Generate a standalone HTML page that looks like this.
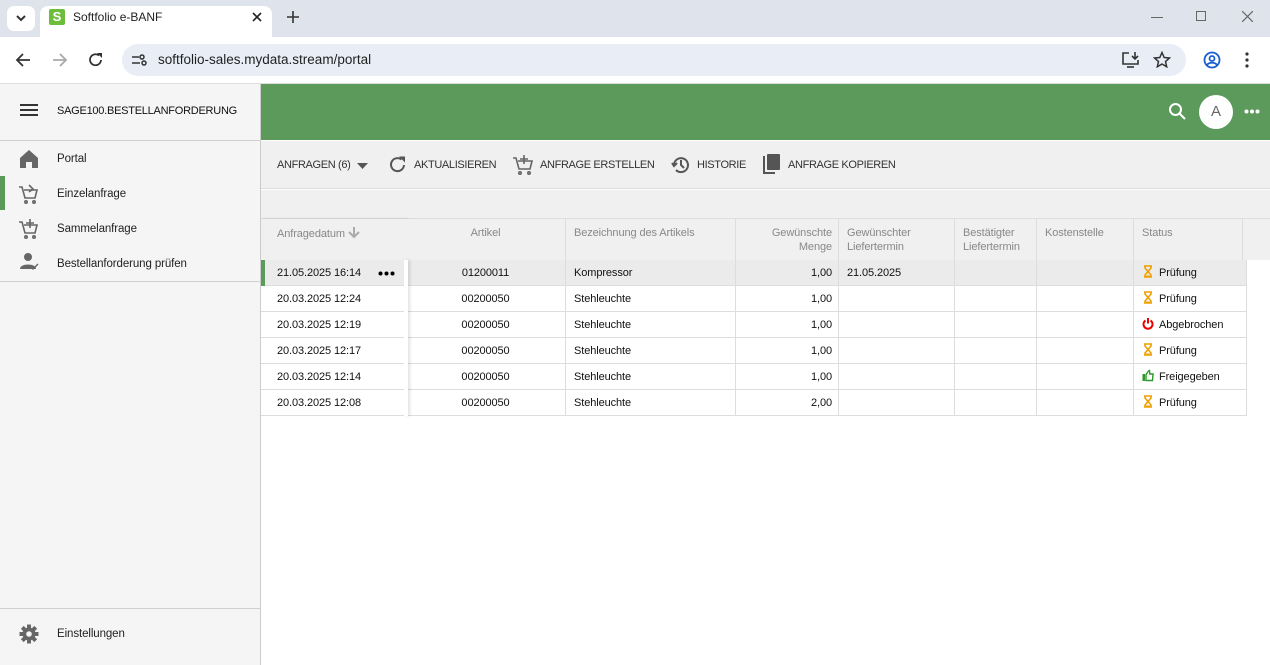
<!DOCTYPE html>
<html><head><meta charset="utf-8"><style>
*{box-sizing:border-box;margin:0;padding:0}
body{width:1270px;height:665px;overflow:hidden;font-family:"Liberation Sans",sans-serif;font-size:12px;color:#222;background:#fff;position:relative}
.abs{position:absolute}
.tabbar{left:0;top:0;width:1270px;height:37px;background:#dfe3eb}
.tab{left:40px;top:6px;width:232px;height:31px;background:#fff;border-radius:8px 8px 0 0}
.addr{left:0;top:37px;width:1270px;height:47px;background:#fff;border-bottom:1px solid #ddd}
.omni{left:122px;top:44px;width:1064px;height:32px;background:#e9eef6;border-radius:16px}
.side{left:0;top:84px;width:261px;height:581px;background:#f5f5f5;border-right:1px solid #ccc}
.hl{height:1px;background:#d0d0d0;left:0;width:260px}
.mi{left:57px;font-size:11.5px;color:#222;letter-spacing:-0.1px}
.green{left:261px;top:84px;width:1009px;height:56px;background:#5b9a5b}
.tool{left:261px;top:141px;width:1009px;height:48px;background:#f0f0f0;border-bottom:1px solid #ddd}
.gap{left:261px;top:190px;width:1009px;height:29px;background:#f0f0f0;border-bottom:1px solid #ddd}
.th{top:219px;height:41px;background:#f0f0f0;color:#888;font-size:11px;line-height:14px;padding:7px 8px;border-right:1px solid #ddd;letter-spacing:-0.1px}
.td{height:26px;line-height:27px;padding:0 8px;border-right:1px solid #ddd;border-bottom:1px solid #ddd;font-size:11px;color:#111;white-space:nowrap;letter-spacing:-0.1px}
.tb{top:159px;font-size:11px;color:#333;letter-spacing:-0.35px}
</style></head><body>
<div class="abs tabbar"></div>
<div class="abs" style="left:7px;top:6px;width:28px;height:25px;background:#fff;border-radius:7px"></div>
<svg class="abs" style="left:15px;top:13px" width="12" height="10"><path d="M2 3 L6 7 L10 3" stroke="#333" stroke-width="2" fill="none"/></svg>
<div class="abs tab"></div>
<div class="abs" style="left:49px;top:9px;width:16px;height:16px;background:#6cbd3c;border-radius:2px;color:#fff;font-weight:bold;font-size:13px;text-align:center;line-height:16px">S</div>
<div class="abs" style="left:73px;top:10px;font-size:12px;color:#222">Softfolio e-BANF</div>
<svg class="abs" style="left:252px;top:12px" width="10" height="10"><path d="M1 1 L9 9 M9 1 L1 9" stroke="#222" stroke-width="1.6"/></svg>
<svg class="abs" style="left:287px;top:11px" width="12" height="12"><path d="M6 0 V12 M0 6 H12" stroke="#333" stroke-width="1.6"/></svg>
<div class="abs" style="left:1151px;top:17px;width:12px;height:1px;background:#666"></div>
<div class="abs" style="left:1196px;top:11px;width:10px;height:10px;border:1px solid #666"></div>
<svg class="abs" style="left:1242px;top:11px" width="11" height="11"><path d="M0 0 L11 11 M11 0 L0 11" stroke="#666" stroke-width="1.2"/></svg>
<div class="abs addr"></div>
<svg class="abs" style="left:15px;top:52px" width="16" height="16"><path d="M15 8 H2 M8 2 L2 8 L8 14" stroke="#333" stroke-width="1.8" fill="none"/></svg>
<svg class="abs" style="left:52px;top:52px" width="16" height="16"><path d="M1 8 H14 M8 2 L14 8 L8 14" stroke="#aaa" stroke-width="1.8" fill="none"/></svg>
<svg class="abs" style="left:88px;top:52px" width="16" height="16"><path d="M13 8 A5.5 5.5 0 1 1 11 3.5" stroke="#333" stroke-width="1.8" fill="none"/><path d="M9 1 H14 V6 Z" fill="#333"/></svg>
<div class="abs omni"></div>
<svg class="abs" style="left:131px;top:53px" width="16" height="14" fill="none" stroke="#333" stroke-width="1.5"><path d="M1 4 H8 M1 10 H9"/><circle cx="11" cy="4" r="2"/><circle cx="13" cy="10" r="2"/></svg>
<div class="abs" style="left:158px;top:52px;font-size:13.5px;color:#1f1f1f">softfolio-sales.mydata.stream/portal</div>
<svg class="abs" style="left:1121px;top:51px" width="20" height="18" fill="none" stroke="#333" stroke-width="1.6"><path d="M8 2 H2 V13 H17 V9"/><path d="M6 16 H13"/><path d="M14 1 V8 M11 5 L14 8 L17 5"/></svg>
<svg class="abs" style="left:1153px;top:51px" width="18" height="17"><path d="M9 1.5 L11.2 6.5 L16.5 7 L12.5 10.5 L13.7 15.8 L9 13 L4.3 15.8 L5.5 10.5 L1.5 7 L6.8 6.5 Z" fill="none" stroke="#333" stroke-width="1.5"/></svg>
<svg class="abs" style="left:1203px;top:51px" width="18" height="18" fill="none" stroke="#1a5fd0" stroke-width="1.8"><circle cx="9" cy="9" r="7.5"/><circle cx="9" cy="7.5" r="2.5"/><path d="M4 14 C6 11 12 11 14 14"/></svg>
<svg class="abs" style="left:1245px;top:52px" width="4" height="16" fill="#333"><circle cx="2" cy="2" r="1.6"/><circle cx="2" cy="8" r="1.6"/><circle cx="2" cy="14" r="1.6"/></svg>

<div class="abs side"></div>
<div class="abs" style="left:20px;top:104px;width:18px;height:2px;background:#333;box-shadow:0 5px 0 #333,0 10px 0 #333"></div>
<div class="abs" style="left:57px;top:105px;font-size:11px;color:#111;letter-spacing:-0.25px">SAGE100.BESTELLANFORDERUNG</div>
<div class="abs hl" style="top:140px"></div>
<div class="abs" style="left:0;top:176px;width:5px;height:34px;background:#5b9a5b"></div>
<svg class="abs" style="left:19px;top:149px" width="20" height="130" viewBox="0 0 20 130" fill="#666">
<path d="M10 1 L19 9 V19 H13 V13 H7 V19 H1 V9 Z"/>
<g fill="none" stroke="#666" stroke-width="1.6"><path d="M0 38 H3 L6 49 H16 L18 41 H5"/><path d="M10 36 L14 40 L10 43"/><circle cx="7" cy="53" r="1.2"/><circle cx="15" cy="53" r="1.2"/>
<path d="M0 73 H3 L6 84 H16 L18 76 H5"/><path d="M11 70 V79 M7 74 H15"/><circle cx="7" cy="88" r="1.2"/><circle cx="15" cy="88" r="1.2"/></g>
<circle cx="9" cy="108" r="4"/><path d="M1 120 C1 114 17 114 17 120 Z"/><path d="M12 118 L14 120 L19 115" stroke="#666" fill="none" stroke-width="1.4"/>
</svg>
<div class="abs mi" style="top:153px">Portal</div>
<div class="abs mi" style="top:188px">Einzelanfrage</div>
<div class="abs mi" style="top:223px">Sammelanfrage</div>
<div class="abs mi" style="top:258px">Bestellanforderung prüfen</div>
<div class="abs hl" style="top:281px"></div>
<div class="abs hl" style="top:608px"></div>
<svg class="abs" style="left:19px;top:624px" width="20" height="20" viewBox="0 0 20 20"><g fill="#666"><circle cx="10" cy="10" r="6.5"/><rect x="8" y="0.5" width="4" height="19"/><rect x="0.5" y="8" width="19" height="4"/><rect x="8" y="0.5" width="4" height="19" transform="rotate(45 10 10)"/><rect x="8" y="0.5" width="4" height="19" transform="rotate(-45 10 10)"/></g><circle cx="10" cy="10" r="2.8" fill="#f5f5f5"/></svg>
<div class="abs mi" style="top:628px">Einstellungen</div>

<div class="abs green"></div>
<svg class="abs" style="left:1168px;top:102px" width="20" height="20"><circle cx="7.5" cy="7.5" r="5.5" fill="none" stroke="#fff" stroke-width="2"/><path d="M11.5 11.5 L17 17" stroke="#fff" stroke-width="2"/></svg>
<div class="abs" style="left:1199px;top:95px;width:34px;height:34px;border-radius:50%;background:#fff;text-align:center;line-height:34px;color:#666;font-size:15px">A</div>
<svg class="abs" style="left:1244px;top:109px" width="16" height="5" fill="#fff"><circle cx="2.5" cy="2.5" r="2"/><circle cx="8" cy="2.5" r="2"/><circle cx="13.5" cy="2.5" r="2"/></svg>

<div class="abs tool"></div>
<div class="abs tb" style="left:277px">ANFRAGEN (6)</div>
<svg class="abs" style="left:357px;top:163px" width="12" height="7"><path d="M0 0 H11 L5.5 6 Z" fill="#555"/></svg>
<svg class="abs" style="left:389px;top:156px" width="18" height="18"><path d="M15 9 A6.5 6.5 0 1 1 12.5 3.5" stroke="#555" stroke-width="2" fill="none"/><path d="M10 0.5 H16 V6.5 Z" fill="#555"/></svg>
<div class="abs tb" style="left:414px">AKTUALISIEREN</div>
<svg class="abs" style="left:513px;top:154px" width="22" height="22" fill="none" stroke="#666" stroke-width="1.6"><path d="M0 4 H3 L6 15 H17 L19 7 H5"/><path d="M11 1 V10 M7 5 H15"/><circle cx="7" cy="19" r="1.2"/><circle cx="16" cy="19" r="1.2"/></svg>
<div class="abs tb" style="left:540px">ANFRAGE ERSTELLEN</div>
<svg class="abs" style="left:671px;top:155px" width="20" height="20" fill="none" stroke="#555" stroke-width="2"><path d="M3 10 A7 7 0 1 1 5 15"/><path d="M1 8 L3 11 L6 8"/><path d="M10 5 V10 L13 13"/></svg>
<div class="abs tb" style="left:697px">HISTORIE</div>
<div class="abs" style="left:763px;top:156px;width:12px;height:18px;border-left:2px solid #555;border-bottom:2px solid #555"></div>
<div class="abs" style="left:767px;top:154px;width:13px;height:16px;background:#555;border-radius:1px"></div>
<div class="abs tb" style="left:788px">ANFRAGE KOPIEREN</div>
<div class="abs gap"></div>

<div class="abs th" style="left:261px;width:145px;border-right:none;padding-left:16px;box-shadow:2px 0 3px rgba(0,0,0,.12)">Anfragedatum <svg width="12" height="13" style="vertical-align:-2px"><path d="M6 1 V11 M1 6 L6 11 L11 6" stroke="#aaa" stroke-width="2" fill="none"/></svg></div>
<div class="abs th" style="left:406px;width:160px;text-align:center">Artikel</div>
<div class="abs th" style="left:566px;width:170px">Bezeichnung des Artikels</div>
<div class="abs th" style="left:736px;width:103px;text-align:right;padding-right:6px">Gewünschte<br>Menge</div>
<div class="abs th" style="left:839px;width:116px">Gewünschter<br>Liefertermin</div>
<div class="abs th" style="left:955px;width:82px">Bestätigter<br>Liefertermin</div>
<div class="abs th" style="left:1037px;width:97px">Kostenstelle</div>
<div class="abs th" style="left:1134px;width:109px">Status</div>
<div class="abs" style="left:1243px;top:219px;width:27px;height:41px;background:#f0f0f0"></div>

<div class="abs" id="rows" style="left:261px;top:260px"></div>
<div class="abs" style="left:404px;top:260px;width:4px;height:156px;box-shadow:2px 0 3px rgba(0,0,0,.12);background:#fff"></div>
<div class="abs" style="left:261px;top:260px;width:4px;height:26px;background:#5b9a5b"></div>
<script>
var d=[["21.05.2025 16:14","01200011","Kompressor","1,00","21.05.2025","P"],
["20.03.2025 12:24","00200050","Stehleuchte","1,00","","P"],
["20.03.2025 12:19","00200050","Stehleuchte","1,00","","A"],
["20.03.2025 12:17","00200050","Stehleuchte","1,00","","P"],
["20.03.2025 12:14","00200050","Stehleuchte","1,00","","F"],
["20.03.2025 12:08","00200050","Stehleuchte","2,00","","P"]];
var h="";
var sv='<svg width="12" height="13" style="vertical-align:-2px;margin-right:5px">';
var ic={P:sv+'<path d="M2 1 H10 M2 12 H10 M3 1 V3 L6 6.5 L3 10 V12 M9 1 V3 L6 6.5 L9 10 V12" stroke="#f0a000" stroke-width="1.6" fill="none"/><path d="M4 10.5 H8 V12 H4 Z" fill="#f0a000"/></svg>Prüfung',
A:sv+'<path d="M3.5 3.5 A4.5 4.5 0 1 0 8.5 3.5" stroke="#e00" stroke-width="2" fill="none"/><path d="M6 1 V6.5" stroke="#e00" stroke-width="2"/></svg>Abgebrochen',
F:sv+'<rect x="0.5" y="5" width="2.5" height="7" fill="#2a9a2a"/><path d="M4 5.5 L6.5 2 L7.5 1.5 L7.8 5 H11 L10.5 11.5 H4 Z" stroke="#2a9a2a" stroke-width="1.4" fill="none"/></svg>Freigegeben'};
d.forEach(function(r,i){var y=i*26,bg=i==0?"#ebebeb":"#fff";
function c(x,w,t,s){h+='<div class="abs td" style="left:'+x+'px;top:'+y+'px;width:'+w+'px;background:'+bg+';'+(s||'')+'">'+t+'</div>';}
c(0,145,r[0]+(i==0?'<svg style="position:absolute;left:117px;top:11px" width="17" height="5"><circle cx="2.5" cy="2.5" r="2"/><circle cx="8.5" cy="2.5" r="2"/><circle cx="14.5" cy="2.5" r="2"/></svg>':''),'padding-left:16px;border-right:none');
c(145,160,r[1],'text-align:center');c(305,170,r[2]);c(475,103,r[3],'text-align:right;padding-right:6px');c(578,116,r[4]);c(694,82,"");c(776,97,"");c(873,113,ic[r[5]]);});
document.getElementById('rows').innerHTML=h;
</script>
</body></html>
